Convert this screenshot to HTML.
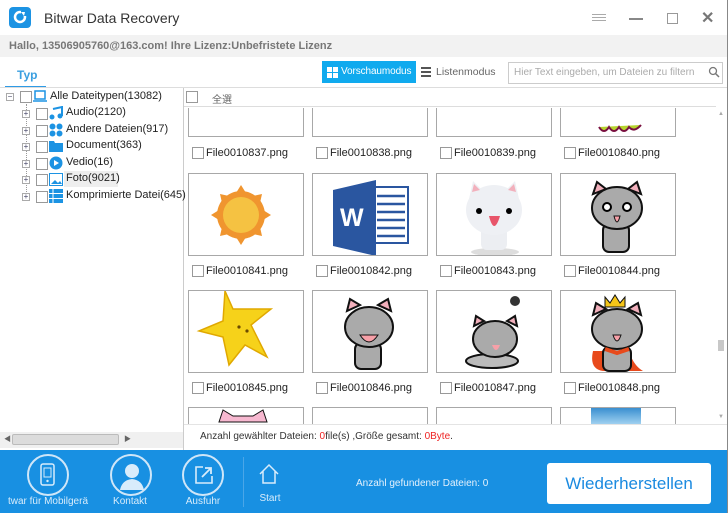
<!DOCTYPE html>
<html><head><meta charset="utf-8"><style>
*{margin:0;padding:0;box-sizing:border-box}
body{width:728px;height:513px;overflow:hidden;background:#fff;font-family:"Liberation Sans","Noto Sans CJK SC",sans-serif;position:relative;font-size:11px;color:#222}
.a{position:absolute}
.cb{position:absolute;width:12px;height:12px;border:1px solid #999;background:#fff}
.cell{position:absolute;width:116px;height:83px;border:1px solid #a8a8a8;background:#fff;overflow:hidden}
.lbl{position:absolute;font-size:11px;color:#222}
.bb{color:#d8ecfb;font-size:10px;text-align:center}
.circ{position:absolute;width:42px;height:42px;border:2px solid #cfe6f8;border-radius:50%}
.ex{position:absolute;left:0;top:2px;width:8px;height:8px;border:1px solid #aaa;background:#fff;font-size:8px;line-height:6px;text-align:center;color:#446}
.tl{position:absolute;left:66px;font-size:11px}
</style></head><body>
<div class="a" style="left:0;top:0;width:728px;height:513px;border-right:1px solid #888"></div>
<!-- title -->
<div class="a" style="left:9px;top:7px;width:22px;height:21px;background:#1c93e3;border-radius:4px"></div>
<svg class="a" style="left:12px;top:9px" width="16" height="16"><circle cx="8" cy="8" r="5" fill="none" stroke="#fff" stroke-width="2.5"/><rect x="9" y="2" width="6" height="5" fill="#1c93e3"/><path d="M9 3l4 0-1 4z" fill="#fff"/></svg>
<div class="a" style="left:44px;top:10px;font-size:14px;color:#333">Bitwar Data Recovery</div>
<div class="a" style="left:592px;top:14px;width:14px;height:1px;background:#aaa;box-shadow:0 3px #aaa,0 6px #aaa"></div>
<div class="a" style="left:629px;top:18px;width:14px;height:2px;background:#888"></div>
<div class="a" style="left:667px;top:13px;width:11px;height:11px;border:1px solid #999"></div>
<div class="a" style="left:701px;top:8px;font-size:16px;font-weight:bold;color:#777">✕</div>
<!-- info bar -->
<div class="a" style="left:0;top:35px;width:727px;height:22px;background:#f2f2f2"></div>
<div class="a" style="left:9px;top:40px;font-size:11px;font-weight:bold;color:#777">Hallo, 13506905760@163.com! Ihre Lizenz:Unbefristete Lizenz</div>
<!-- tab row -->
<div class="a" style="left:17px;top:68px;font-size:12px;font-weight:bold;color:#3a9fe0">Typ</div>
<div class="a" style="left:5px;top:86px;width:41px;height:2px;background:#2e9be6"></div>
<div class="a" style="left:0;top:87px;width:727px;height:1px;background:#ddd"></div>
<div class="a" style="left:322px;top:61px;width:94px;height:22px;background:#10aaee"></div>
<svg class="a" style="left:327px;top:67px" width="11" height="11"><rect width="5" height="5" fill="#fff"/><rect x="6" width="5" height="5" fill="#fff"/><rect y="6" width="5" height="5" fill="#fff"/><rect x="6" y="6" width="5" height="5" fill="#fff"/></svg>
<div class="a" style="left:341px;top:66px;color:#fff;font-size:10px;letter-spacing:-0.1px">Vorschaumodus</div>
<div class="a" style="left:421px;top:67px;width:10px;height:2px;background:#555;box-shadow:0 4px #555,0 8px #555"></div>
<div class="a" style="left:436px;top:66px;color:#666;font-size:10.5px">Listenmodus</div>
<div class="a" style="left:508px;top:62px;width:215px;height:22px;border:1px solid #ccc"></div>
<div class="a" style="left:514px;top:67px;color:#aaa;font-size:10px">Hier Text eingeben, um Dateien zu filtern</div>
<svg class="a" style="left:708px;top:66px" width="12" height="12"><circle cx="5" cy="5" r="3.5" fill="none" stroke="#777" stroke-width="1.3"/><path d="M7.5 7.5L11 11" stroke="#777" stroke-width="1.5"/></svg>
<!-- left tree -->
<div class="a" style="left:183px;top:88px;width:1px;height:362px;background:#ccc"></div>
<div class="a" style="left:6px;top:91px"><div class="ex">−</div></div>
<div class="cb" style="left:20px;top:91px"></div>
<svg class="a" style="left:33px;top:90px" width="14" height="13"><rect x="2" y="1" width="10" height="8" fill="none" stroke="#1c93e3" stroke-width="1.5"/><path d="M0 11h14" stroke="#1c93e3" stroke-width="1.5"/></svg>
<div class="a" style="left:50px;top:90px;font-size:11px">Alle Dateitypen(13082)</div>
<div class="a" style="left:26px;top:104px;width:0;height:92px;border-left:1px dotted #999"></div>
<div class="tl" style="top:106px">Audio(2120)</div>
<div class="tl" style="top:123px">Andere Dateien(917)</div>
<div class="tl" style="top:139px">Document(363)</div>
<div class="tl" style="top:156px">Vedio(16)</div>
<div class="a" style="left:64px;top:171px;width:54px;height:16px;background:#eee"></div>
<div class="tl" style="top:172px">Foto(9021)</div>
<div class="tl" style="top:189px">Komprimierte Datei(645)</div>
<div class="a" style="left:22px;top:108px"><div class="ex">+</div><div class="cb" style="left:14px;top:0"></div></div>
<div class="a" style="left:22px;top:125px"><div class="ex">+</div><div class="cb" style="left:14px;top:0"></div></div>
<div class="a" style="left:22px;top:141px"><div class="ex">+</div><div class="cb" style="left:14px;top:0"></div></div>
<div class="a" style="left:22px;top:158px"><div class="ex">+</div><div class="cb" style="left:14px;top:0"></div></div>
<div class="a" style="left:22px;top:174px"><div class="ex">+</div><div class="cb" style="left:14px;top:0"></div></div>
<div class="a" style="left:22px;top:191px"><div class="ex">+</div><div class="cb" style="left:14px;top:0"></div></div>
<!-- icons -->
<svg class="a" style="left:49px;top:106px" width="14" height="14"><path d="M4 3l9-2v9" stroke="#1c93e3" stroke-width="2" fill="none"/><circle cx="3" cy="11" r="2.5" fill="#1c93e3"/><circle cx="11" cy="10" r="2.5" fill="#1c93e3"/></svg>
<svg class="a" style="left:49px;top:123px" width="14" height="14"><circle cx="3.5" cy="3.5" r="3" fill="#1c93e3"/><circle cx="10.5" cy="3.5" r="3" fill="#1c93e3"/><circle cx="3.5" cy="10.5" r="3" fill="#1c93e3"/><circle cx="10.5" cy="10.5" r="3" fill="#1c93e3"/></svg>
<svg class="a" style="left:49px;top:140px" width="14" height="12"><path d="M0 1h5l1 2h8v9H0z" fill="#1c93e3"/></svg>
<svg class="a" style="left:49px;top:156px" width="14" height="14"><circle cx="7" cy="7" r="6.5" fill="#1c93e3"/><path d="M5 4l5 3-5 3z" fill="#fff"/></svg>
<svg class="a" style="left:49px;top:173px" width="14" height="13"><rect x="0.5" y="0.5" width="13" height="12" fill="none" stroke="#1c93e3"/><path d="M2 11l4-4 3 3 2-2 2 3z" fill="#1c93e3"/></svg>
<svg class="a" style="left:49px;top:189px" width="14" height="14"><rect width="14" height="14" fill="#1c93e3"/><path d="M0 4.5h14M0 9.5h14M4 0v14" stroke="#fff"/></svg>
<!-- horizontal scrollbar -->
<div class="a" style="left:0;top:432px;width:183px;height:16px;background:#f0f0f0"></div>
<div class="a" style="left:12px;top:434px;width:107px;height:11px;background:#dcdcdc;border:1px solid #bbb;border-radius:2px"></div>
<div class="a" style="left:4px;top:434px;font-size:7px;color:#666">◀</div>
<div class="a" style="left:124px;top:434px;font-size:7px;color:#666">▶</div>
<!-- grid header -->
<div class="a" style="left:184px;top:88px;width:532px;height:19px;border-bottom:1px solid #ddd"></div>
<div class="cb" style="left:186px;top:91px"></div>
<div class="a" style="left:212px;top:91px;font-size:10px;color:#666">全選</div>
<!-- vertical scrollbar -->
<div class="a" style="left:716px;top:108px;width:11px;height:316px;background:#fff"></div>
<div class="a" style="left:718px;top:340px;width:6px;height:11px;background:#c8c8c8"></div>
<div class="a" style="left:718px;top:111px;font-size:6px;color:#aaa">▲</div>
<div class="a" style="left:718px;top:414px;font-size:6px;color:#aaa">▼</div>
<!-- grid -->
<div class="a" style="left:184px;top:108px;width:532px;height:316px;overflow:hidden">
 <div class="cell" style="left:4px;top:-54px"></div>
 <div class="cell" style="left:128px;top:-54px"></div>
 <div class="cell" style="left:252px;top:-54px"></div>
 <div class="cell" style="left:376px;top:-54px"><svg width="116" height="83"><path d="M38 72q5 8 10 0q5 8 10 0q5 8 10 0q5 6 12-2" fill="#b6d42e" stroke="#7a1040" stroke-width="2"/></svg></div>
 <div class="cb" style="left:8px;top:39px"></div><div class="lbl" style="left:22px;top:39px">File0010837.png</div>
 <div class="cb" style="left:132px;top:39px"></div><div class="lbl" style="left:146px;top:39px">File0010838.png</div>
 <div class="cb" style="left:256px;top:39px"></div><div class="lbl" style="left:270px;top:39px">File0010839.png</div>
 <div class="cb" style="left:380px;top:39px"></div><div class="lbl" style="left:394px;top:39px">File0010840.png</div>
 <div class="cell" style="left:4px;top:65px"><svg width="116" height="83"><g transform="translate(52,41)" fill="#f0952f"><circle r="24" fill="#f0952f"/><path d="M0-30l5 8h-10zM0 30l5-8h-10zM-30 0l8 5v-10zM30 0l-8 5v-10zM21-21l-2 9-7-7zM-21 21l2-9 7 7zM21 21l-9-2 7-7zM-21-21l9 2-7 7z"/><circle r="18" fill="#f5c242"/></g></svg></div>
 <div class="cell" style="left:128px;top:65px"><svg width="116" height="83"><rect x="60" y="13" width="35" height="56" fill="#fff" stroke="#2a56a0" stroke-width="2"/><path d="M64 22h28M64 30h28M64 38h28M64 46h28M64 54h28M64 62h28" stroke="#2a56a0" stroke-width="2.5"/><path d="M20 16l43-10v76l-43-10z" fill="#2a56a0"/><text x="27" y="52" font-family="Liberation Sans" font-weight="bold" font-size="25" fill="#fff">W</text></svg></div>
 <div class="cell" style="left:252px;top:65px"><svg width="116" height="83"><ellipse cx="58" cy="78" rx="24" ry="4" fill="#ddd"/><rect x="44" y="48" width="26" height="28" rx="6" fill="#eceef2"/><ellipse cx="57" cy="36" rx="28" ry="25" fill="#eef0f4"/><path d="M32 25l4-18 12 12zM82 25l-4-18-12 12z" fill="#eef0f4"/><path d="M35 18l2-8 6 6zM79 18l-2-8-6 6z" fill="#f2b0bc"/><circle cx="42" cy="37" r="3" fill="#000"/><circle cx="72" cy="37" r="3" fill="#000"/><path d="M52 42q5 20 11 0z" fill="#e8556a"/></svg></div>
 <div class="cell" style="left:376px;top:65px"><svg width="116" height="83"><rect x="42" y="50" width="26" height="28" rx="6" fill="#aaa" stroke="#111" stroke-width="2"/><path d="M32 20l4-12 9 7zM80 20l-4-12-9 7z" fill="#f2b0bc" stroke="#111" stroke-width="2"/><ellipse cx="56" cy="34" rx="25" ry="21" fill="#aaa" stroke="#111" stroke-width="2"/><circle cx="46" cy="33" r="4" fill="#fff" stroke="#000" stroke-width="2"/><circle cx="66" cy="33" r="4" fill="#fff" stroke="#000" stroke-width="2"/><path d="M53 42q3 12 6 0z" fill="#f7a0a8" stroke="#111"/></svg></div>
 <div class="cb" style="left:8px;top:157px"></div><div class="lbl" style="left:22px;top:157px">File0010841.png</div>
 <div class="cb" style="left:132px;top:157px"></div><div class="lbl" style="left:146px;top:157px">File0010842.png</div>
 <div class="cb" style="left:256px;top:157px"></div><div class="lbl" style="left:270px;top:157px">File0010843.png</div>
 <div class="cb" style="left:380px;top:157px"></div><div class="lbl" style="left:394px;top:157px">File0010844.png</div>
 <div class="cell" style="left:4px;top:182px"><svg width="116" height="83"><path d="M36 0l8 18 38 0 -20 16 16 32 -22-12 -16 20 -6-28 -24-6 24-10z" fill="#f6d21a" stroke="#e0a800" stroke-width="1.5"/><circle cx="50" cy="36" r="1.6" fill="#6a4a00"/><circle cx="58" cy="40" r="1.6" fill="#6a4a00"/></svg></div>
 <div class="cell" style="left:128px;top:182px"><svg width="116" height="83"><rect x="42" y="52" width="26" height="26" rx="6" fill="#aaa" stroke="#111" stroke-width="2"/><path d="M34 20l3-12 10 6zM78 20l-3-12-10 6z" fill="#f2b0bc" stroke="#111" stroke-width="2"/><ellipse cx="56" cy="36" rx="24" ry="20" fill="#aaa" stroke="#111" stroke-width="2"/><path d="M47 44q9 14 18 0z" fill="#f7a0a8" stroke="#111"/></svg></div>
 <div class="cell" style="left:252px;top:182px"><svg width="116" height="83"><circle cx="78" cy="10" r="5" fill="#333"/><ellipse cx="55" cy="70" rx="26" ry="7" fill="#bbb" stroke="#111" stroke-width="2"/><path d="M37 35l2-10 8 5zM80 35l-2-10-8 5z" fill="#f2b0bc" stroke="#111" stroke-width="2"/><ellipse cx="58" cy="48" rx="22" ry="18" fill="#aaa" stroke="#111" stroke-width="2"/><path d="M55 54q4 10 8 0z" fill="#f7a0a8"/></svg></div>
 <div class="cell" style="left:376px;top:182px"><svg width="116" height="83"><path d="M44 6l5 6 5-8 5 8 5-6v10h-20z" fill="#f5c518" stroke="#111"/><path d="M32 60q-4 18 10 20h40q-10-6-14-20z" fill="#e84a1c"/><rect x="42" y="56" width="28" height="24" rx="6" fill="#aaa" stroke="#111" stroke-width="2"/><path d="M32 24l3-12 10 6zM80 24l-3-12-10 6z" fill="#f2b0bc" stroke="#111" stroke-width="2"/><ellipse cx="56" cy="38" rx="25" ry="20" fill="#aaa" stroke="#111" stroke-width="2"/><path d="M52 44q4 12 8 0z" fill="#f7a0a8" stroke="#111"/><path d="M44 58l12 4 12-4" stroke="#e84a1c" stroke-width="4" fill="none"/></svg></div>
 <div class="cb" style="left:8px;top:274px"></div><div class="lbl" style="left:22px;top:274px">File0010845.png</div>
 <div class="cb" style="left:132px;top:274px"></div><div class="lbl" style="left:146px;top:274px">File0010846.png</div>
 <div class="cb" style="left:256px;top:274px"></div><div class="lbl" style="left:270px;top:274px">File0010847.png</div>
 <div class="cb" style="left:380px;top:274px"></div><div class="lbl" style="left:394px;top:274px">File0010848.png</div>
 <div class="cell" style="left:4px;top:299px"><svg width="116" height="83"><path d="M30 14l4-12 10 6h20l10-6 4 12z" fill="#f7b8d0" stroke="#111"/></svg></div>
 <div class="cell" style="left:128px;top:299px"></div>
 <div class="cell" style="left:252px;top:299px"></div>
 <div class="cell" style="left:376px;top:299px"><div class="a" style="left:30px;top:0;width:50px;height:16px;background:linear-gradient(#3a8fd0,#9fd0f0)"></div></div>
</div>
<!-- status -->
<div class="a" style="left:184px;top:424px;width:543px;height:26px;background:#fff;border-top:1px solid #e4e4e4"></div>
<div class="a" style="left:200px;top:431px;font-size:10px;color:#333">Anzahl gewählter Dateien: <span style="color:#e22">0</span>file(s) ,Größe gesamt: <span style="color:#e22">0Byte</span>.</div>
<!-- bottom bar -->
<div class="a" style="left:0;top:450px;width:727px;height:63px;background:#1890e2"></div>
<div class="circ" style="left:27px;top:454px"></div>
<svg class="a" style="left:40px;top:463px" width="16" height="24"><rect x="1" y="1" width="13" height="21" rx="2" fill="none" stroke="#d8ecfb" stroke-width="1.5"/><rect x="4" y="5" width="7" height="9" fill="none" stroke="#d8ecfb"/><circle cx="7.5" cy="18" r="1.2" fill="#d8ecfb"/></svg>
<div class="a bb" style="left:3px;top:496px;width:90px">twar für Mobilgerä</div>
<div class="circ" style="left:110px;top:454px"></div>
<svg class="a" style="left:116px;top:460px" width="32" height="32"><circle cx="16" cy="11" r="7" fill="#d8ecfb"/><path d="M4 30q2-10 12-11q10 1 12 11z" fill="#d8ecfb"/></svg>
<div class="a bb" style="left:100px;top:496px;width:60px">Kontakt</div>
<div class="circ" style="left:182px;top:454px"></div>
<svg class="a" style="left:194px;top:465px" width="20" height="20"><path d="M9 2H2v16h16v-7" fill="none" stroke="#d8ecfb" stroke-width="1.6"/><path d="M8 12l9-9M11 3h6v6" fill="none" stroke="#d8ecfb" stroke-width="1.8"/></svg>
<div class="a bb" style="left:173px;top:496px;width:60px">Ausfuhr</div>
<div class="a" style="left:243px;top:457px;width:1px;height:50px;background:#4aa6e8"></div>
<svg class="a" style="left:258px;top:463px" width="22" height="22"><path d="M2 11L11 2l9 9M5 8v12h12V8" fill="none" stroke="#d8ecfb" stroke-width="1.5"/></svg>
<div class="a bb" style="left:250px;top:493px;width:40px">Start</div>
<div class="a" style="left:356px;top:478px;font-size:10px;color:#e4f1fc">Anzahl gefundener Dateien: 0</div>
<div class="a" style="left:547px;top:463px;width:164px;height:41px;background:#fff;border-radius:3px"></div>
<div class="a" style="left:547px;top:474px;width:164px;text-align:center;font-size:17px;color:#1a8ae0">Wiederherstellen</div>
</body></html>
